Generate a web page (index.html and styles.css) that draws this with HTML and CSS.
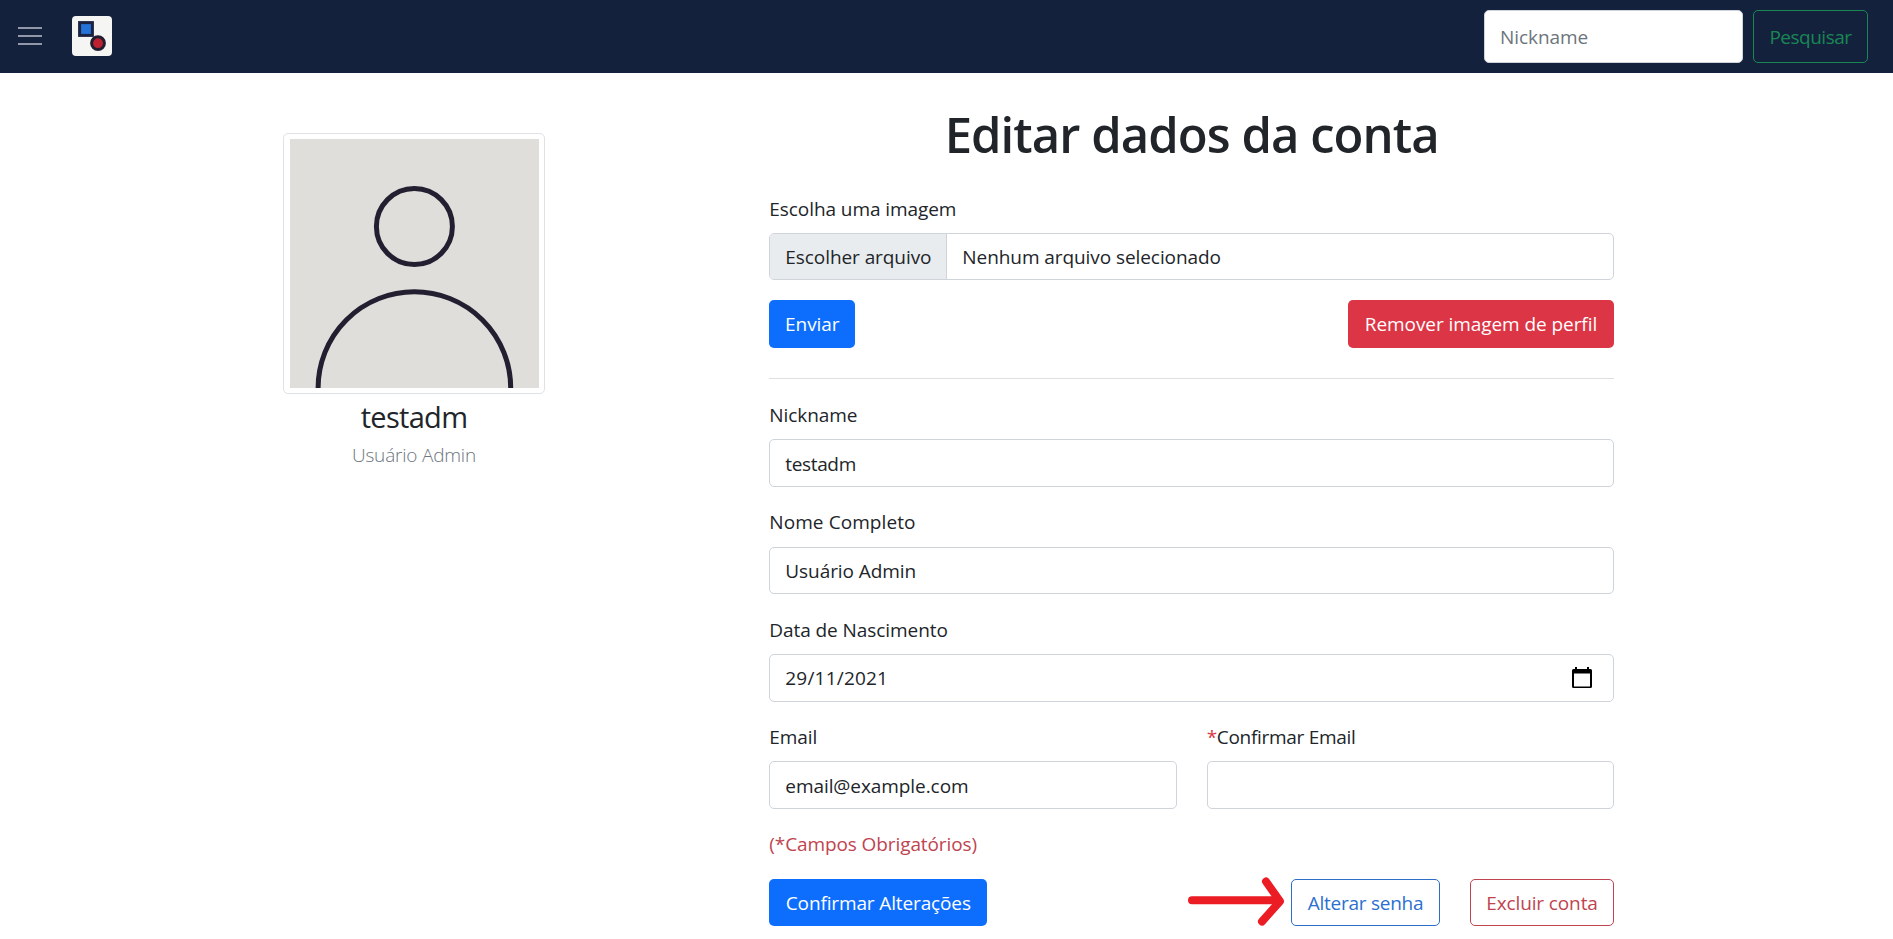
FILE: index.html
```html
<!DOCTYPE html>
<html lang="pt-BR">
<head>
<meta charset="utf-8">
<title>Editar dados da conta</title>
<link rel="stylesheet" href="styles.css">
</head>
<body>
<header class="navbar">
  <div class="brand">
    <svg class="menu" viewBox="0 0 38 38" aria-label="Menu"><path d="M7 11h24M7 19h24M7 27h24"/></svg>
    <svg class="logo" viewBox="0 0 40 40" aria-hidden="true">
      <rect width="40" height="40" rx="4" fill="#f5f5f4"/>
      <rect x="7.6" y="6.6" width="12.8" height="12.8" fill="#2473d8" stroke="#1c2340" stroke-width="3"/>
      <circle cx="26" cy="27.2" r="6.4" fill="#bd2130" stroke="#221e30" stroke-width="3"/>
    </svg>
  </div>
  <form class="search">
    <input class="search-input" type="text" placeholder="Nickname">
    <button class="btn search-btn" type="button">Pesquisar</button>
  </form>
</header>
<main class="page">
  <aside class="profile">
    <svg class="avatar" viewBox="0 0 249 249" role="img" aria-label="Imagem de perfil">
      <rect width="249" height="249" fill="#dfdeda"/>
      <g fill="none" stroke="#231f30" stroke-width="5">
        <circle cx="124.4" cy="87.5" r="38"/>
        <ellipse cx="124.4" cy="249" rx="96.3" ry="96.3"/>
      </g>
    </svg>
    <h2 class="nick">testadm</h2>
    <p class="fullname">Usuário Admin</p>
  </aside>
  <section class="account">
    <h1 class="title">Editar dados da conta</h1>
    <label class="label">Escolha uma imagem</label>
    <div class="control file">
      <span class="file-btn">Escolher arquivo</span>
      <span class="file-name">Nenhum arquivo selecionado</span>
    </div>
    <div class="row image-actions">
      <button class="btn primary send">Enviar</button>
      <button class="btn danger remove">Remover imagem de perfil</button>
    </div>
    <hr class="rule">
    <div class="field">
      <label class="label" for="nick">Nickname</label>
      <input class="control tight" id="nick" type="text" value="testadm">
    </div>
    <div class="field">
      <label class="label loose" for="name">Nome Completo</label>
      <input class="control" id="name" type="text" value="Usuário Admin">
    </div>
    <div class="field">
      <label class="label" for="birth">Data de Nascimento</label>
      <div class="control date" id="birth">
        <span class="date-value">29/11/2021</span>
        <svg class="calendar" viewBox="0 0 20 22" aria-hidden="true"><path fill-rule="evenodd" d="M3 0h2v2h10V0h2v2h1.500a1.500 1.500 0 0 1 1.500 1.500v16a1.500 1.500 0 0 1-1.500 1.500h-17a1.500 1.500 0 0 1-1.500-1.500v-16a1.500 1.500 0 0 1 1.500-1.500h1.500zM2 6.500v13h16V6.500z"/></svg>
      </div>
    </div>
    <div class="pair">
      <div class="field">
        <label class="label" for="email">Email</label>
        <input class="control" id="email" type="text" value="email@example.com">
      </div>
      <div class="field">
        <label class="label confirm" for="email2"><span class="star">*</span>Confirmar Email</label>
        <input class="control" id="email2" type="text">
      </div>
    </div>
    <p class="required">(*Campos Obrigatórios)</p>
    <div class="row">
      <button class="btn primary save">Confirmar Alterações</button>
      <div class="row account-actions">
        <svg class="arrow" viewBox="0 0 98 50" aria-hidden="true"><path d="M5 23.300H92M79 4.500L93 24.300L75 44.500"/></svg>
        <button class="btn outline-primary change">Alterar senha</button>
        <button class="btn outline-danger delete">Excluir conta</button>
      </div>
    </div>
  </section>
</main>
</body>
</html>
```
FILE: styles.css
```css
* { box-sizing: border-box; }

body {
  margin: 0;
  background: #fff;
  color: #212529;
  font: 19px/30px "Open Sans", "Noto Sans", sans-serif;
  letter-spacing: -0.07px;
  overflow: hidden;
}

button, input { font: inherit; letter-spacing: inherit; color: inherit; }

.navbar {
  display: flex;
  align-items: center;
  justify-content: space-between;
  height: 73px;
  padding: 0 25px 0 11px;
  background: #14213d;
}
.brand { display: flex; align-items: center; gap: 23px; padding-bottom: 1px; }
.menu { width: 38px; height: 38px; fill: none; stroke: #8f97a8; stroke-width: 2; }
.logo { width: 40px; height: 40px; }
.search { display: flex; gap: 10px; }
.search-input {
  width: 259px;
  height: 53px;
  padding: 1px 15px 0;
  border: 1px solid #ced4da;
  border-radius: 5px;
  background: #fff;
}
.search-input::placeholder { color: #6c757d; opacity: 1; }

.btn {
  height: 47.500px;
  padding: 1px 0 0;
  border: 1px solid transparent;
  border-radius: 5px;
  background: transparent;
  text-align: center;
  white-space: nowrap;
}
.search-btn { width: 115px; height: 53px; border-color: #198754; color: #198754; letter-spacing: -0.5px; }
.primary { background: #0d6efd; color: #fff; }
.danger { background: #dc3545; color: #fff; }
.outline-primary { border-color: #2b6fc8; color: #2b6fd0; }
.outline-danger { border-color: #c04450; color: #c04450; }

.page { display: flex; gap: 224.300px; padding-left: 283px; }

.profile { width: 262px; padding-top: 60.300px; text-align: center; }
.avatar {
  display: block;
  width: 262px;
  height: 261px;
  padding: 5px 5px 5px 6px;
  border: 1px solid #dee2e6;
  border-radius: 5px;
}
.nick { margin: 5px 0 0; font-size: 29px; font-weight: 400; line-height: 36px; letter-spacing: -0.7px; }
.fullname { margin: 5px 0 0; font-weight: 300; color: #6c757d; letter-spacing: -0.2px; }

.account { width: 844.700px; padding-top: 30.600px; }
.title {
  margin: 0 0 30px;
  font-size: 49px;
  font-weight: 600;
  line-height: 60px;
  letter-spacing: -0.95px;
  text-align: center;
}
.label { display: block; margin-bottom: 9.500px; }
.loose { letter-spacing: 0.08px; }
.confirm { letter-spacing: -0.3px; }
.star { color: #dc3545; }
.control {
  display: block;
  width: 100%;
  height: 47.500px;
  padding: 1px 15px 0;
  border: 1px solid #ced4da;
  border-radius: 5px;
  background: #fff;
}
.tight { letter-spacing: -0.35px; }
.file { display: flex; align-items: center; height: 47px; padding: 0; overflow: hidden; }
.file-btn {
  width: 177px;
  padding: 8px 0 8px 15px;
  border-right: 1px solid #ced4da;
  background: #e9ecef;
}
.file-name { padding-left: 15px; }
.row { display: flex; justify-content: space-between; }
.image-actions { margin-top: 20px; }
.send { width: 86px; }
.remove { width: 266px; }
.rule { margin: 30px 0 21.200px; border: 0; border-top: 1px solid #dedfe0; }
.field { margin-bottom: 20.400px; }
.date { display: flex; align-items: center; justify-content: space-between; padding-right: 21px; }
.date-value { letter-spacing: 0.2px; }
.calendar { width: 20px; height: 22px; margin-top: -1px; }
.pair { display: grid; grid-template-columns: 1fr 1fr; column-gap: 30px; }
.required { margin: 0 0 19.500px; color: #c04450; letter-spacing: -0.1px; }
.save { width: 218px; letter-spacing: -0.13px; }
.account-actions { width: 427px; }
.arrow {
  width: 98px;
  height: 50px;
  margin: -2px -24px 0 0;
  fill: none;
  stroke: #ec1c24;
  stroke-width: 8;
  stroke-linecap: round;
  stroke-linejoin: round;
}
.change { width: 149px; letter-spacing: -0.25px; }
.delete { width: 144px; letter-spacing: -0.12px; }
```
